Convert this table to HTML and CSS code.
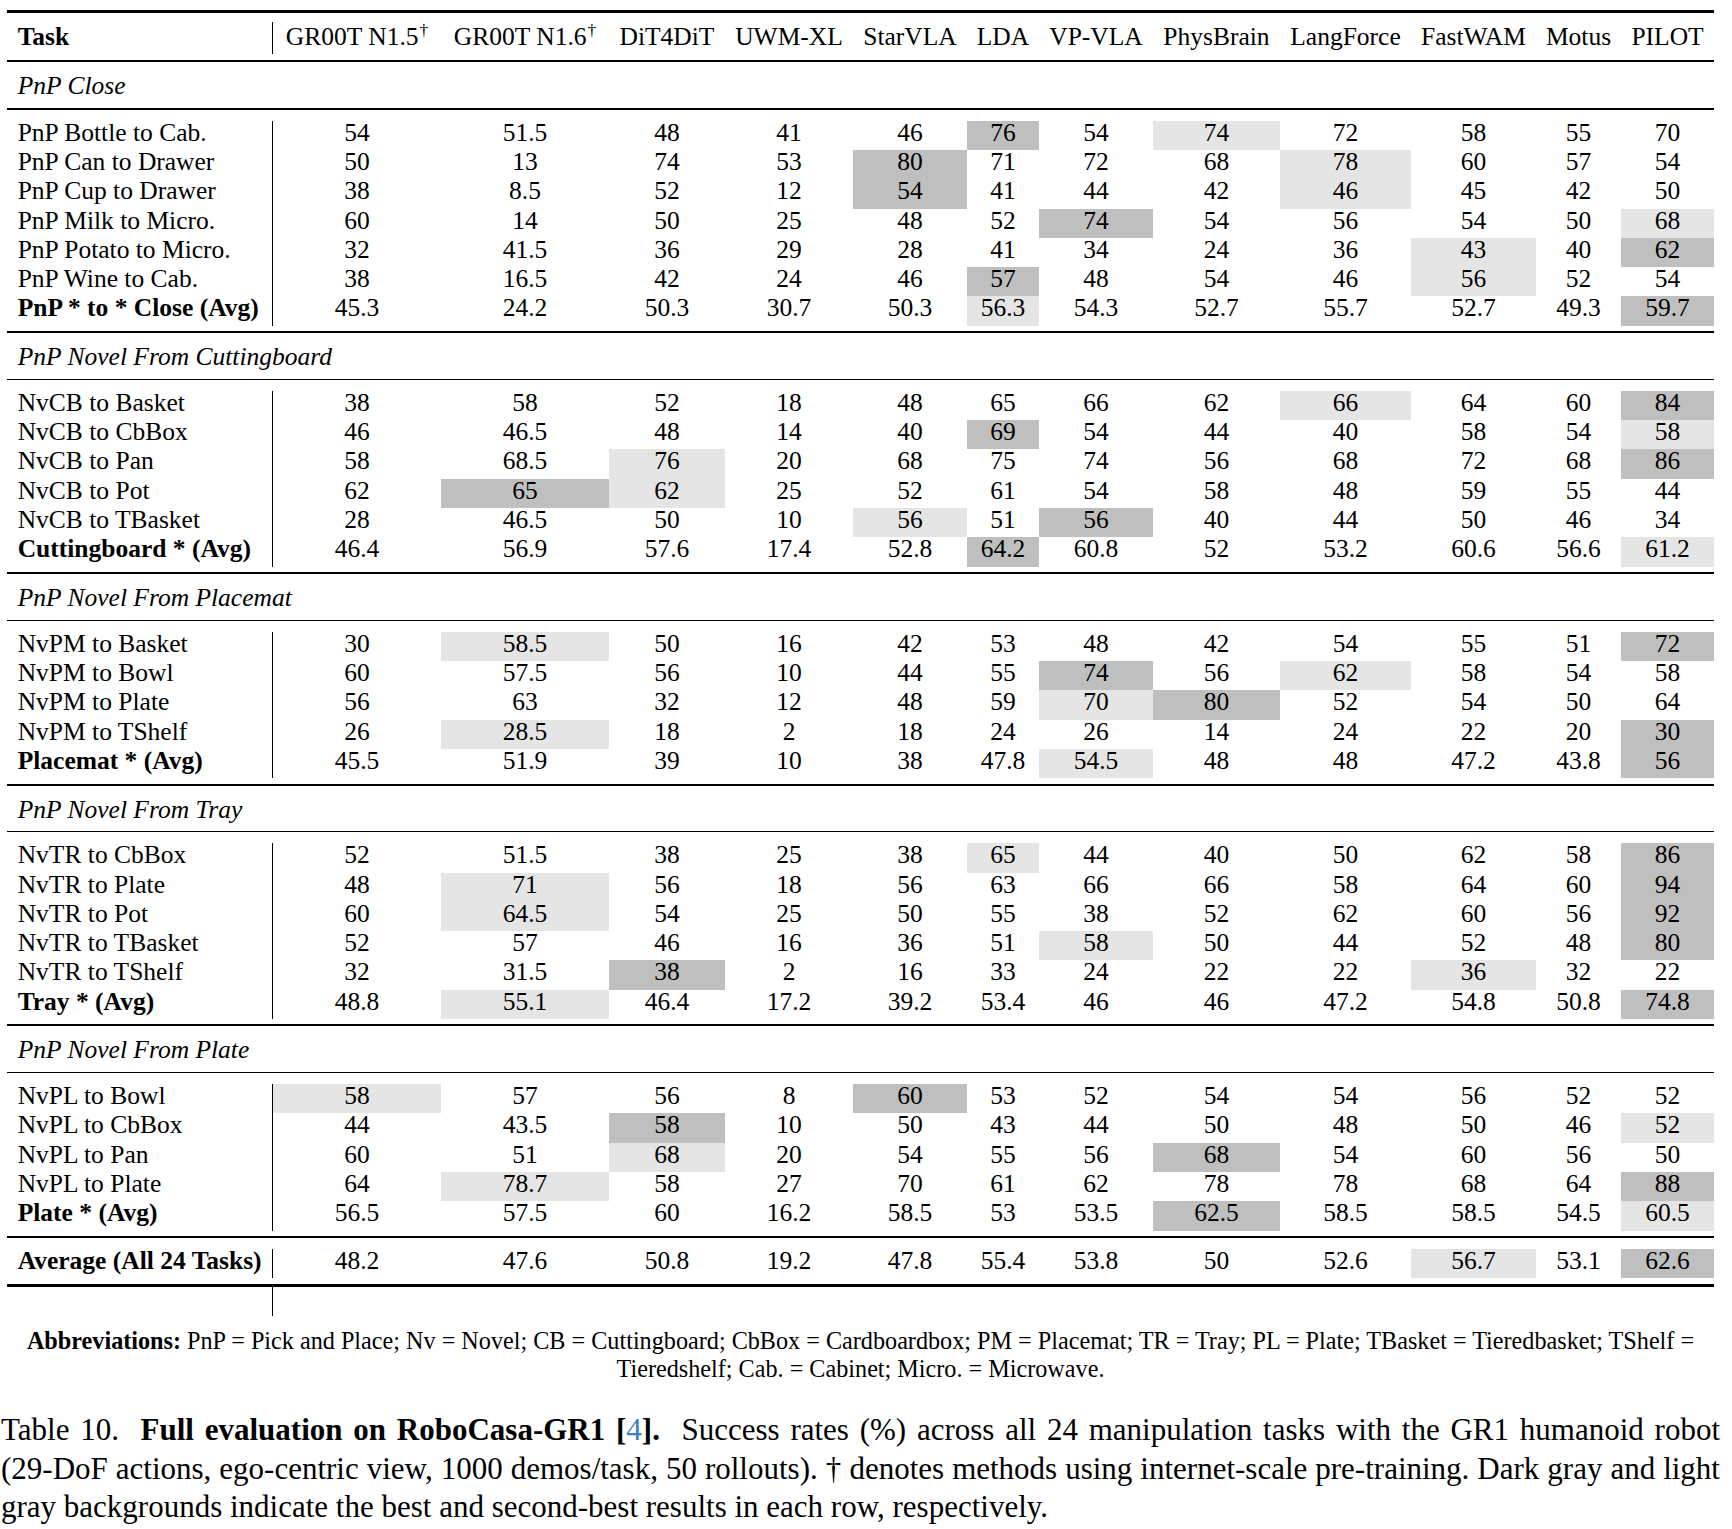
FILE: index.html
```html
<!DOCTYPE html>
<html>
<head>
    <title>Table 10 - RoboCasa-GR1</title>
    <link rel="stylesheet" href="styles.css">
</head>
<body>
<div class="page">
    <div class="results">
        <!-- Header -->
        <div class="head">
            <div class="row">
                <div class="task"><b>Task</b></div>
                <div>GR00T N1.5<sup>&dagger;</sup></div>
                <div>GR00T N1.6<sup>&dagger;</sup></div>
                <div>DiT4DiT</div>
                <div>UWM-XL</div>
                <div>StarVLA</div>
                <div>LDA</div>
                <div>VP-VLA</div>
                <div>PhysBrain</div>
                <div>LangForce</div>
                <div>FastWAM</div>
                <div>Motus</div>
                <div>PILOT</div>
            </div>
        </div>

        <!-- PnP Close -->
        <div class="group"><div class="section">PnP Close</div></div>
        <div class="group">
            <div class="row"><div class="task">PnP Bottle to Cab.</div><div>54</div><div>51.5</div><div>48</div><div>41</div><div>46</div><div class="best">76</div><div>54</div><div class="second">74</div><div>72</div><div>58</div><div>55</div><div>70</div></div>
            <div class="row"><div class="task">PnP Can to Drawer</div><div>50</div><div>13</div><div>74</div><div>53</div><div class="best">80</div><div>71</div><div>72</div><div>68</div><div class="second">78</div><div>60</div><div>57</div><div>54</div></div>
            <div class="row"><div class="task">PnP Cup to Drawer</div><div>38</div><div>8.5</div><div>52</div><div>12</div><div class="best">54</div><div>41</div><div>44</div><div>42</div><div class="second">46</div><div>45</div><div>42</div><div>50</div></div>
            <div class="row"><div class="task">PnP Milk to Micro.</div><div>60</div><div>14</div><div>50</div><div>25</div><div>48</div><div>52</div><div class="best">74</div><div>54</div><div>56</div><div>54</div><div>50</div><div class="second">68</div></div>
            <div class="row"><div class="task">PnP Potato to Micro.</div><div>32</div><div>41.5</div><div>36</div><div>29</div><div>28</div><div>41</div><div>34</div><div>24</div><div>36</div><div class="second">43</div><div>40</div><div class="best">62</div></div>
            <div class="row"><div class="task">PnP Wine to Cab.</div><div>38</div><div>16.5</div><div>42</div><div>24</div><div>46</div><div class="best">57</div><div>48</div><div>54</div><div>46</div><div class="second">56</div><div>52</div><div>54</div></div>
            <div class="row"><div class="task"><b>PnP * to * Close (Avg)</b></div><div>45.3</div><div>24.2</div><div>50.3</div><div>30.7</div><div>50.3</div><div class="second">56.3</div><div>54.3</div><div>52.7</div><div>55.7</div><div>52.7</div><div>49.3</div><div class="best">59.7</div></div>
        </div>

        <!-- Cuttingboard -->
        <div class="group"><div class="section">PnP Novel From Cuttingboard</div></div>
        <div class="group thin">
            <div class="row"><div class="task">NvCB to Basket</div><div>38</div><div>58</div><div>52</div><div>18</div><div>48</div><div>65</div><div>66</div><div>62</div><div class="second">66</div><div>64</div><div>60</div><div class="best">84</div></div>
            <div class="row"><div class="task">NvCB to CbBox</div><div>46</div><div>46.5</div><div>48</div><div>14</div><div>40</div><div class="best">69</div><div>54</div><div>44</div><div>40</div><div>58</div><div>54</div><div class="second">58</div></div>
            <div class="row"><div class="task">NvCB to Pan</div><div>58</div><div>68.5</div><div class="second">76</div><div>20</div><div>68</div><div>75</div><div>74</div><div>56</div><div>68</div><div>72</div><div>68</div><div class="best">86</div></div>
            <div class="row"><div class="task">NvCB to Pot</div><div>62</div><div class="best">65</div><div class="second">62</div><div>25</div><div>52</div><div>61</div><div>54</div><div>58</div><div>48</div><div>59</div><div>55</div><div>44</div></div>
            <div class="row"><div class="task">NvCB to TBasket</div><div>28</div><div>46.5</div><div>50</div><div>10</div><div class="second">56</div><div>51</div><div class="best">56</div><div>40</div><div>44</div><div>50</div><div>46</div><div>34</div></div>
            <div class="row"><div class="task"><b>Cuttingboard * (Avg)</b></div><div>46.4</div><div>56.9</div><div>57.6</div><div>17.4</div><div>52.8</div><div class="best">64.2</div><div>60.8</div><div>52</div><div>53.2</div><div>60.6</div><div>56.6</div><div class="second">61.2</div></div>
        </div>

        <!-- Placemat -->
        <div class="group"><div class="section">PnP Novel From Placemat</div></div>
        <div class="group thin">
            <div class="row"><div class="task">NvPM to Basket</div><div>30</div><div class="second">58.5</div><div>50</div><div>16</div><div>42</div><div>53</div><div>48</div><div>42</div><div>54</div><div>55</div><div>51</div><div class="best">72</div></div>
            <div class="row"><div class="task">NvPM to Bowl</div><div>60</div><div>57.5</div><div>56</div><div>10</div><div>44</div><div>55</div><div class="best">74</div><div>56</div><div class="second">62</div><div>58</div><div>54</div><div>58</div></div>
            <div class="row"><div class="task">NvPM to Plate</div><div>56</div><div>63</div><div>32</div><div>12</div><div>48</div><div>59</div><div class="second">70</div><div class="best">80</div><div>52</div><div>54</div><div>50</div><div>64</div></div>
            <div class="row"><div class="task">NvPM to TShelf</div><div>26</div><div class="second">28.5</div><div>18</div><div>2</div><div>18</div><div>24</div><div>26</div><div>14</div><div>24</div><div>22</div><div>20</div><div class="best">30</div></div>
            <div class="row"><div class="task"><b>Placemat * (Avg)</b></div><div>45.5</div><div>51.9</div><div>39</div><div>10</div><div>38</div><div>47.8</div><div class="second">54.5</div><div>48</div><div>48</div><div>47.2</div><div>43.8</div><div class="best">56</div></div>
        </div>

        <!-- Tray -->
        <div class="group"><div class="section">PnP Novel From Tray</div></div>
        <div class="group thin">
            <div class="row"><div class="task">NvTR to CbBox</div><div>52</div><div>51.5</div><div>38</div><div>25</div><div>38</div><div class="second">65</div><div>44</div><div>40</div><div>50</div><div>62</div><div>58</div><div class="best">86</div></div>
            <div class="row"><div class="task">NvTR to Plate</div><div>48</div><div class="second">71</div><div>56</div><div>18</div><div>56</div><div>63</div><div>66</div><div>66</div><div>58</div><div>64</div><div>60</div><div class="best">94</div></div>
            <div class="row"><div class="task">NvTR to Pot</div><div>60</div><div class="second">64.5</div><div>54</div><div>25</div><div>50</div><div>55</div><div>38</div><div>52</div><div>62</div><div>60</div><div>56</div><div class="best">92</div></div>
            <div class="row"><div class="task">NvTR to TBasket</div><div>52</div><div>57</div><div>46</div><div>16</div><div>36</div><div>51</div><div class="second">58</div><div>50</div><div>44</div><div>52</div><div>48</div><div class="best">80</div></div>
            <div class="row"><div class="task">NvTR to TShelf</div><div>32</div><div>31.5</div><div class="best">38</div><div>2</div><div>16</div><div>33</div><div>24</div><div>22</div><div>22</div><div class="second">36</div><div>32</div><div>22</div></div>
            <div class="row"><div class="task"><b>Tray * (Avg)</b></div><div>48.8</div><div class="second">55.1</div><div>46.4</div><div>17.2</div><div>39.2</div><div>53.4</div><div>46</div><div>46</div><div>47.2</div><div>54.8</div><div>50.8</div><div class="best">74.8</div></div>
        </div>

        <!-- Plate -->
        <div class="group"><div class="section">PnP Novel From Plate</div></div>
        <div class="group thin">
            <div class="row"><div class="task">NvPL to Bowl</div><div class="second">58</div><div>57</div><div>56</div><div>8</div><div class="best">60</div><div>53</div><div>52</div><div>54</div><div>54</div><div>56</div><div>52</div><div>52</div></div>
            <div class="row"><div class="task">NvPL to CbBox</div><div>44</div><div>43.5</div><div class="best">58</div><div>10</div><div>50</div><div>43</div><div>44</div><div>50</div><div>48</div><div>50</div><div>46</div><div class="second">52</div></div>
            <div class="row"><div class="task">NvPL to Pan</div><div>60</div><div>51</div><div class="second">68</div><div>20</div><div>54</div><div>55</div><div>56</div><div class="best">68</div><div>54</div><div>60</div><div>56</div><div>50</div></div>
            <div class="row"><div class="task">NvPL to Plate</div><div>64</div><div class="second">78.7</div><div>58</div><div>27</div><div>70</div><div>61</div><div>62</div><div>78</div><div>78</div><div>68</div><div>64</div><div class="best">88</div></div>
            <div class="row"><div class="task"><b>Plate * (Avg)</b></div><div>56.5</div><div>57.5</div><div>60</div><div>16.2</div><div>58.5</div><div>53</div><div>53.5</div><div class="best">62.5</div><div>58.5</div><div>58.5</div><div>54.5</div><div class="second">60.5</div></div>
        </div>

        <!-- Overall -->
        <div class="group">
            <div class="row"><div class="task"><b>Average (All 24 Tasks)</b></div><div>48.2</div><div>47.6</div><div>50.8</div><div>19.2</div><div>47.8</div><div>55.4</div><div>53.8</div><div>50</div><div>52.6</div><div class="second">56.7</div><div>53.1</div><div class="best">62.6</div></div>
        </div>
        <div class="tail">
            <div class="row"><div class="task"></div></div>
        </div>
    </div>

    <p class="abbrev"><b>Abbreviations:</b> PnP = Pick and Place; Nv = Novel; CB = Cuttingboard; CbBox = Cardboardbox; PM = Placemat; TR = Tray; PL = Plate; TBasket = Tieredbasket; TShelf =<br>Tieredshelf; Cab. = Cabinet; Micro. = Microwave.</p>

    <p class="caption">Table 10.&nbsp; <b>Full evaluation on RoboCasa-GR1 [<span class="cite">4</span>].</b>&nbsp; Success rates (%) across all 24 manipulation tasks with the GR1 humanoid robot <span class="setup">(29&#8209;DoF actions, ego-centric view, 1000 demos/task, 50 rollouts). &dagger; denotes methods using internet-scale pre-training. Dark gray and light gray backgrounds indicate the best and second-best results in each row, respectively.</span></p>
</div>
</body>
</html>
```

FILE: styles.css
```css
body {
    margin: 0;
    background: #ffffff;
    color: #000000;
    font-family: "Liberation Serif", "Times New Roman", serif;
}

.page {
    width: 1719px;
    margin-left: 1px;
}

/* Results table */
.results {
    width: 1707px;
    margin: 10px auto 0;
    border-top: 3px solid #000;
    font-size: 25.5px;
}

.head {
    padding: 9px 0 6px;
}

.group {
    border-top: 2px solid #000;
    padding: 11px 0 5.4px;
}

.group.thin {
    border-top-width: 1.4px;
}

.tail {
    border-top: 3px solid #000;
}

.row {
    display: grid;
    grid-template-columns: 266px 168px 168px 116px 128px 114px 72px 114px 127px 131px 125px 85px 93px;
}

.row > div {
    text-align: center;
    line-height: 23px;
    padding-bottom: 6.3px;
    white-space: nowrap;
}

.head .row > div {
    line-height: 30px;
    padding-bottom: 2px;
}

.row > .task {
    text-align: left;
    padding-left: 10.7px;
    border-right: 1px solid #000;
    min-height: 23px;
}

.row > .best {
    background: #bfbfbf;
}

.row > .second {
    background: #e5e5e5;
}

sup {
    font-size: 0.68em;
    line-height: 0;
    vertical-align: 0.5em;
    margin-left: 1px;
}

.section {
    font-style: italic;
    padding-left: 10.7px;
    line-height: 25px;
    padding-bottom: 4.3px;
}

/* Notes below the table */
.abbrev {
    margin: 11.5px 0 0;
    text-align: center;
    font-size: 24.2px;
    line-height: 27.6px;
}

.caption {
    margin: 28.8px 0 0;
    font-size: 31px;
    line-height: 38.3px;
    text-align: justify;
}

.cite {
    color: #3d7cc9;
    font-weight: normal;
}
```
